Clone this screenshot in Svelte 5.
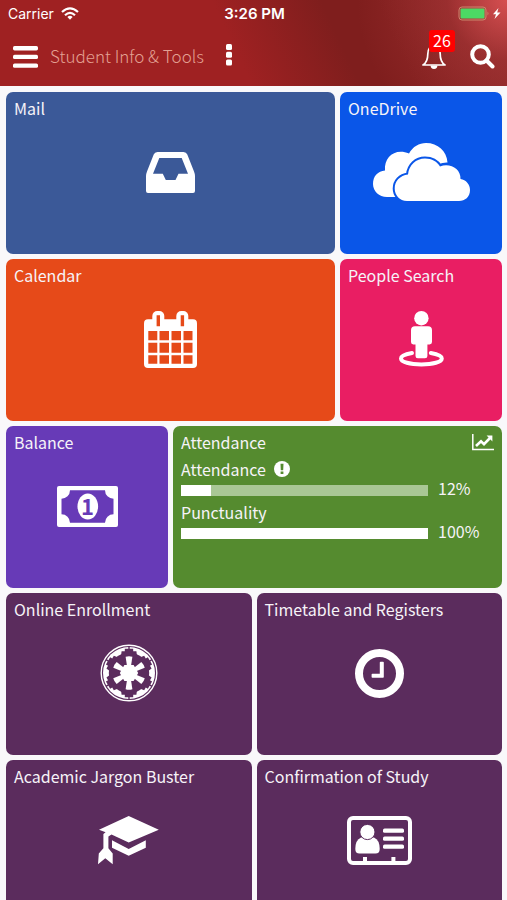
<script>
  const unread = 26;

  const scores = [
    { label: "Attendance", value: 12, warn: true },
    { label: "Punctuality", value: 100, warn: false },
  ];

  const tiles = [
    { id: "mail", title: "Mail", span: "wide", color: "blue" },
    { id: "onedrive", title: "OneDrive", span: "small", color: "azure" },
    { id: "calendar", title: "Calendar", span: "wide", color: "orange" },
    { id: "people", title: "People Search", span: "small", color: "pink" },
    { id: "balance", title: "Balance", span: "small", color: "violet" },
    { id: "attendance", title: "Attendance", span: "wide", color: "green" },
    { id: "enrollment", title: "Online Enrollment", span: "half", color: "plum" },
    { id: "timetable", title: "Timetable and Registers", span: "half", color: "plum" },
    { id: "jargon", title: "Academic Jargon Buster", span: "half", color: "plum" },
    { id: "study", title: "Confirmation of Study", span: "half", color: "plum" },
  ];

  const spokes = [0, 60, 120, 180, 240, 300];
</script>

<div class="app">
  <header class="header">
    <div class="status">
      <div class="status__left">
        <span>Carrier</span>
        <svg width="18" height="13" viewBox="0 0 18 13" fill="none" stroke="#fff" stroke-width="2.2" aria-hidden="true">
          <path d="M1 5 Q9 -2.4 17 5" />
          <path d="M4 8.2 Q9 3.6 14 8.2" />
          <path d="M6.4 10 Q9 7.6 11.6 10 L9 12.8 Z" fill="#fff" stroke="none" />
        </svg>
      </div>
      <div class="status__time">3:26 PM</div>
      <div class="status__right">
        <svg width="43" height="15" viewBox="0 0 43 15" aria-hidden="true">
          <rect x="1" y="1" width="27" height="13" rx="3" fill="none" stroke="#c9876c" />
          <rect x="2.5" y="2.5" width="24" height="10" rx="1" fill="#4cd964" />
          <path d="M29.5 5.5 Q31.5 7.5 29.5 9.5 Z" fill="#c9876c" />
          <path d="M40.5 2 L35 8.3 H38 L36.5 13 L42.5 6.6 H39.2 Z" fill="#fff" />
        </svg>
      </div>
    </div>

    <nav class="nav">
      <button class="nav__btn" aria-label="Menu">
        <svg width="25" height="22" viewBox="0 0 25 22" fill="#fff">
          <rect y="0" width="25" height="4.4" rx="1.6" />
          <rect y="8.7" width="25" height="4.4" rx="1.6" />
          <rect y="17.4" width="25" height="4.4" rx="1.6" />
        </svg>
      </button>
      <h1 class="nav__title">Student Info &amp; Tools</h1>
      <button class="nav__btn nav__btn--more" aria-label="More options">
        <svg width="6" height="22" viewBox="0 0 6 22" fill="#fff">
          <rect y="0" width="6" height="6" rx="1.5" />
          <rect y="7.7" width="6" height="6" rx="1.5" />
          <rect y="15.4" width="6" height="6" rx="1.5" />
        </svg>
      </button>
      <div class="nav__right">
        <button class="nav__btn bell" aria-label="Notifications">
          <svg width="24" height="26" viewBox="0 0 24 26" fill="none" stroke="#fff" stroke-width="1.7" stroke-linejoin="round">
            <path d="M12 2.5 C7.5 2.5 5.8 6 5.8 10 C5.8 16 4.2 19 1 21 H23 C19.8 19 18.2 16 18.2 10 C18.2 6 16.5 2.5 12 2.5 Z" />
            <path d="M8.6 21.5 A3.4 3.4 0 0 0 15.4 21.5 Z" fill="#fff" stroke="none" />
          </svg>
          <span class="bell__count">{unread}</span>
        </button>
        <button class="nav__btn" aria-label="Search">
          <svg width="25" height="25" viewBox="0 0 25 25" fill="none" stroke="#fff" stroke-width="4">
            <circle cx="10.5" cy="10.5" r="8.3" />
            <path d="M16.5 16.5 L22.5 22.5" stroke-linecap="round" />
          </svg>
        </button>
      </div>
    </nav>
  </header>

  <main class="tiles">
    {#each tiles as tile (tile.id)}
      <a class="tile {tile.span} {tile.color}" href="#{tile.id}">
        <div class="tile__head">
          <h2 class="tile__title">{tile.title}</h2>
          {#if tile.id === "attendance"}
            <svg width="22" height="17" viewBox="0 0 22 17" fill="none" stroke="#fff" aria-hidden="true">
              <path d="M0.8 0 V15.6 H22" stroke-width="1.5" />
              <path d="M4 12 L9 7.3 L12 10.2 L18 4" stroke-width="2.6" />
              <path d="M14.6 1.6 H20.4 V7.4 Z" fill="#fff" stroke="none" />
            </svg>
          {/if}
        </div>

        {#if tile.id === "attendance"}
          <div class="scores">
            {#each scores as score}
              <div class="score">
                <div class="score__label">
                  <span>{score.label}</span>
                  {#if score.warn}
                    <svg width="16" height="16" viewBox="0 0 16 16" aria-hidden="true">
                      <circle cx="8" cy="8" r="8" fill="#fff" />
                      <path class="cut" d="M6.5 2.8 H9.5 L9.2 9.2 H6.8 Z M6.6 10.4 H9.4 V13 H6.6 Z" />
                    </svg>
                  {/if}
                </div>
                <div class="score__row">
                  <div class="bar" role="progressbar" aria-label={score.label} aria-valuenow={score.value}>
                    <div class="bar__fill" style="width: {score.value}%"></div>
                  </div>
                  <span class="score__value">{score.value}%</span>
                </div>
              </div>
            {/each}
          </div>
        {:else}
          <div class="tile__icon">
            {#if tile.id === "mail"}
              <svg width="49" height="41" viewBox="0 0 49 41">
                <path
                  fill-rule="evenodd"
                  d="M11.5 0 H37.5 Q40.3 0 41.3 2.5 L48 19.5 Q49 22 49 24 V39 Q49 41 47 41 H2 Q0 41 0 39 V24 Q0 22 1 19.5 L7.7 2.5 Q8.7 0 11.5 0 Z M13.3 6 L7 21.7 H16.8 L19.8 28 H29.5 L32.5 21.7 H42 L35.7 6 Z"
                />
              </svg>
            {:else if tile.id === "onedrive"}
              <svg width="97" height="58" viewBox="0 0 97 58">
                <path d="M22 54 H14 C6 54 0 48 0 41 C0 33 5 28 12 27.5 C11 14 22 5 36 10.5 C40 3.5 46 0 53 0 C65 0 73.5 8 74.5 19.5 Q70 19.3 66 21 L60 40 Z" />
                <path
                  class="cloud"
                  d="M34 58 C26.5 58 21.7 52 21.7 45.5 C21.7 38 27 32.5 35 31.5 C36 22 43 15.5 52 15.5 C59 15.5 64 18.5 67 23.5 C77 19.5 88 26 87.5 36 C93 37 97 41 97 47 C97 54 92 58 86 58 Z"
                />
              </svg>
            {:else if tile.id === "calendar"}
              <svg width="53" height="57" viewBox="0 0 53 57">
                <rect y="8.3" width="53" height="48.7" rx="4" />
                <rect x="8.3" width="12" height="18" rx="5" />
                <rect x="32.3" width="12" height="18" rx="5" />
                <path
                  class="cut"
                  d="M12.6 4.3 h3.4 v11 h-3.4z M36.7 4.3 h3.4 v11 h-3.4z M4.3 20 h9 v9.3 h-9z M15.5 20 h9.5 v9.3 h-9.5z M27.5 20 h9.5 v9.3 h-9.5z M39.5 20 h9 v9.3 h-9z M4.3 31.8 h9 v10 h-9z M15.5 31.8 h9.5 v10 h-9.5z M27.5 31.8 h9.5 v10 h-9.5z M39.5 31.8 h9 v10 h-9z M4.3 44.2 h9 v8.6 h-9z M15.5 44.2 h9.5 v8.6 h-9.5z M27.5 44.2 h9.5 v8.6 h-9.5z M39.5 44.2 h9 v8.6 h-9z"
                />
              </svg>
            {:else if tile.id === "people"}
              <svg width="45" height="56" viewBox="0 0 45 56">
                <circle cx="22.4" cy="7.2" r="7.2" />
                <path d="M16 15.2 H29 Q33 15.2 33 19.2 V31 Q33 33.4 30.5 33.4 H28.4 V45 Q28.4 47.3 26 47.3 H18.8 Q16.5 47.3 16.5 45 V33.4 H14.3 Q12 33.4 12 31 V19.2 Q12 15.2 16 15.2 Z" />
                <path class="line" d="M13 42 C6 43.2 2 45.2 2 47.4 C2 51 11 53.4 22.4 53.4 S42.8 51 42.8 47.4 C42.8 45.2 38.8 43.2 31.8 42" />
              </svg>
            {:else if tile.id === "balance"}
              <svg width="61" height="41" viewBox="0 0 61 41">
                <rect width="61" height="41" rx="2" />
                <path class="cut" d="M13 4.3 H48 A8.5 8.5 0 0 0 56.5 12.8 V28.2 A8.5 8.5 0 0 0 48 36.7 H13 A8.5 8.5 0 0 0 4.5 28.2 V12.8 A8.5 8.5 0 0 0 13 4.3 Z" />
                <ellipse cx="30.8" cy="20.5" rx="10.3" ry="13" />
                <text class="cut note" x="30.5" y="28.5" text-anchor="middle">1</text>
              </svg>
            {:else if tile.id === "enrollment"}
              <svg width="58" height="58" viewBox="-29 -29 58 58">
                <circle r="27.8" fill="none" stroke="#fff" stroke-width="1.4" />
                <circle r="26" />
                <circle class="cut" r="20.2" />
                {#each spokes as angle}
                  <g transform="rotate({angle})">
                    <path class="cut" d="M-8 -17 L-7.4 -21.8 H-4.2 V-24.2 H-0.7 V-26.6 H0.7 V-24.2 H4.2 V-21.8 H7.4 L8 -17 Z" />
                    <path d="M-2 -7 L-3.4 -16.2 Q0 -17.2 3.4 -16.2 L2 -7 Z" />
                  </g>
                {/each}
                <path d="M-4.6 -8 H4.6 L9.2 0 L4.6 8 H-4.6 L-9.2 0 Z" />
              </svg>
            {:else if tile.id === "timetable"}
              <svg width="49" height="49" viewBox="0 0 49 49">
                <circle cx="24.5" cy="24.5" r="20.5" fill="none" stroke="#fff" stroke-width="8" />
                <path d="M25.6 12.8 H28 Q28.8 12.8 28.8 13.6 V28 Q28.8 28.8 28 28.8 H17.4 Q16.6 28.8 16.6 28 V25.6 Q16.6 24.8 17.4 24.8 H24.8 V13.6 Q24.8 12.8 25.6 12.8 Z" />
              </svg>
            {:else if tile.id === "jargon"}
              <svg width="61" height="49" viewBox="0 0 61 49">
                <path d="M30.7 0 L60.8 13.7 L30.7 26.5 L13.5 18.6 L10.4 20.5 V32.3 L14.7 37.5 V48.3 L7.3 42.3 L0 48.3 L0.8 37.5 L5.4 32.3 V18 L7.6 16.2 L1 13.7 Z" />
                <path d="M14 24.2 L30.7 33 L47.8 24.2 V31.8 L30.7 39.8 L14 31.8 Z" />
              </svg>
            {:else if tile.id === "study"}
              <svg width="65" height="49" viewBox="0 0 65 49">
                <rect class="frame" x="2" y="2" width="61" height="45" rx="4" />
                <path d="M16 41 h4 v5 h-4z M44.4 41 h4 v5 h-4z" />
                <path d="M14 21.5 H27 Q32.7 24 32.7 33 Q32.7 37.6 28.5 37.6 H12.5 Q8.3 37.6 8.3 33 Q8.3 24 14 21.5 Z" />
                <circle class="head" cx="20.4" cy="16" r="7.6" />
                <rect x="36" y="12.6" width="21" height="4.2" rx="1.6" />
                <rect x="36" y="20.6" width="21" height="4.2" rx="1.6" />
                <rect x="36" y="28.6" width="21" height="4.2" rx="1.6" />
              </svg>
            {/if}
          </div>
        {/if}
      </a>
    {/each}
  </main>
</div>

<style>
:global(body) {
  margin: 0;
}

.app {
  display: flex;
  flex-direction: column;
  height: 100vh;
  overflow: hidden;
  background-color: #f9f8fa;
  font-family: "Noto Sans CJK SC", "Noto Sans", sans-serif;
  color: #fff;
}

.header {
  flex: none;
  background:
    radial-gradient(circle at 100% 0, rgba(232, 88, 90, 0.8), rgba(200, 70, 72, 0.3) 60px, rgba(190, 70, 72, 0) 150px),
    linear-gradient(65deg, #9f2122 0%, #9f2122 46%, #7f1e1d 66%, #7f1e1d 76%, #8c2a2a 100%);
}

.status {
  display: grid;
  grid-template-columns: 1fr auto 1fr;
  align-items: center;
  height: 27px;
  padding: 0 6px 0 8px;
  font-family: Inter, sans-serif;
  font-size: 14px;
  line-height: 18px;
}
.status__left {
  display: flex;
  align-items: center;
  gap: 7px;
}
.status__time {
  font-size: 15px;
  font-weight: 600;
}
.status__right {
  display: flex;
  justify-content: flex-end;
}

.nav {
  display: flex;
  align-items: center;
  height: 59px;
  padding: 0 12px 0 13px;
}
.nav__btn {
  display: block;
  padding: 0;
  border: 0;
  background: none;
  color: #fff;
  font: inherit;
  cursor: pointer;
}
.nav__btn svg {
  display: block;
}
.nav__btn--more {
  margin-left: 22px;
  padding-bottom: 4px;
}
.nav__title {
  margin: 0 0 0 12px;
  padding-bottom: 2px;
  color: #e3a093;
  font-size: 17px;
  font-weight: 300;
  line-height: 24px;
}
.nav__right {
  display: flex;
  align-items: center;
  gap: 24px;
  margin-left: auto;
}

.bell {
  position: relative;
}
.bell__count {
  position: absolute;
  top: -14px;
  left: 7px;
  padding: 0 4px 2px;
  border-radius: 3px;
  background-color: #f00;
  font-size: 16px;
  line-height: 20px;
}

.tiles {
  flex: 1;
  display: grid;
  grid-template-columns: repeat(6, 1fr);
  grid-auto-rows: 162px;
  gap: 5px;
  padding: 6px 5px 6px 6px;
  overflow-y: auto;
  scrollbar-width: none;
}

.tile {
  display: flex;
  flex-direction: column;
  box-sizing: border-box;
  min-width: 0;
  padding: 4px 8px;
  border-radius: 7px;
  background-color: var(--tile);
  color: #f6f3f8;
  font-size: 16px;
  text-decoration: none;
}
.tile__head {
  display: flex;
  align-items: center;
  justify-content: space-between;
}
.tile__title {
  margin: 0;
  font-size: 16px;
  font-weight: 400;
  line-height: 24px;
  white-space: nowrap;
}
.tile__icon {
  flex: 1;
  display: flex;
  align-items: center;
  justify-content: center;
  padding-bottom: 26px;
}
.tile__icon svg {
  display: block;
  fill: #fff;
}

.wide {
  grid-column: span 4;
}
.half {
  grid-column: span 3;
}
.small {
  grid-column: span 2;
}

.blue {
  --tile: #3b5998;
}
.azure {
  --tile: #0a56e8;
}
.orange {
  --tile: #e64a19;
}
.pink {
  --tile: #e91e63;
}
.violet {
  --tile: #673ab7;
}
.green {
  --tile: #558b2f;
}
.plum {
  --tile: #5b2c5d;
}

.cut {
  fill: var(--tile);
}
.cloud {
  stroke: var(--tile);
  stroke-width: 4;
  paint-order: stroke;
}
.line,
.frame {
  fill: none;
  stroke: #fff;
  stroke-width: 4;
  stroke-linecap: round;
}
.head {
  stroke: var(--tile);
  stroke-width: 1;
}
.note {
  font-size: 22px;
  font-weight: 700;
}

.scores {
  display: flex;
  flex-direction: column;
  gap: 5px;
  padding-top: 4px;
}
.score__label {
  display: flex;
  align-items: center;
  gap: 8px;
  line-height: 22px;
}
.score__row {
  display: grid;
  grid-template-columns: 1fr 56px;
  align-items: end;
  gap: 10px;
}
.score__value {
  line-height: 16px;
}
.bar {
  height: 11px;
  background-color: #a9c795;
}
.bar__fill {
  height: 100%;
  background-color: #fff;
}
</style>
